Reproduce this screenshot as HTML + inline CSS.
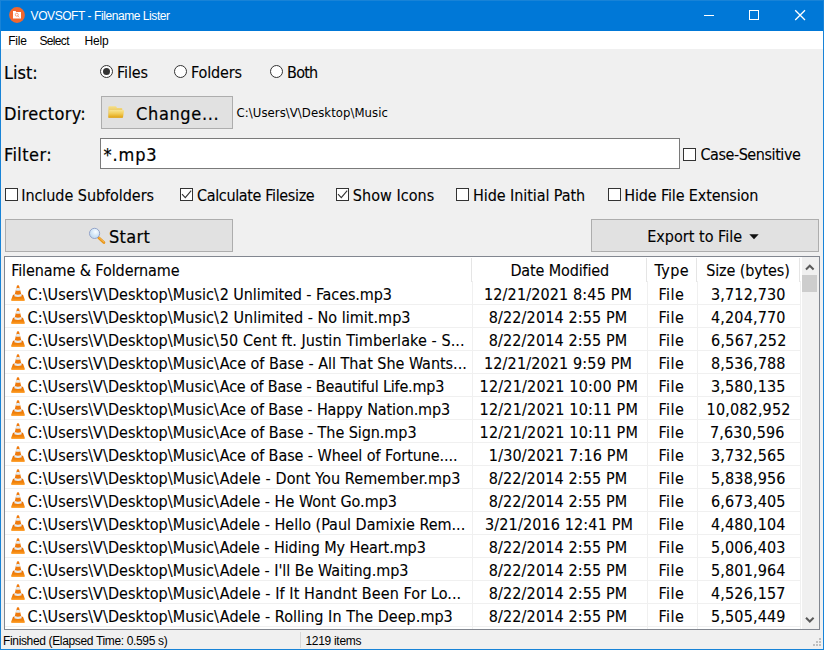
<!DOCTYPE html>
<html><head><meta charset="utf-8"><title>VOVSOFT - Filename Lister</title>
<style>
html,body{margin:0;padding:0;}
body{width:824px;height:650px;overflow:hidden;position:relative;background:#f0f0f0;font-family:"DejaVu Sans Condensed","Liberation Sans",sans-serif;color:#000;}
.abs{position:absolute;white-space:nowrap;}
#title{left:0;top:0;width:824px;height:31px;background:#0078d7;}
.ttl{font-size:12px;color:#fff;line-height:15px;font-family:"Liberation Sans",sans-serif;}
.mnu{font-size:12px;line-height:19px;font-family:"Liberation Sans",sans-serif;}
#menu{left:1px;top:31px;width:822px;height:18px;background:#fff;}
#bl{left:0;top:0;width:1px;height:650px;background:#1883d7;}
#bt{left:0;top:0;width:824px;height:1px;background:#1883d7;}
#br{left:823px;top:0;width:1px;height:650px;background:#1883d7;}
#bb{left:0;top:649px;width:824px;height:1px;background:#1883d7;}
.lbl{font-size:18px;line-height:22px;-webkit-text-stroke:0.2px #000;}
.opt{font-size:16px;line-height:20px;-webkit-text-stroke:0.1px #000;}
.pth{font-size:13px;line-height:16px;}
.sts{font-size:12px;line-height:17px;font-family:"Liberation Sans",sans-serif;}
.radio{width:11px;height:11px;border:1px solid #333;border-radius:50%;background:#fff;}
.radio.on::after{content:"";position:absolute;left:2px;top:2px;width:7px;height:7px;border-radius:50%;background:#333;}
.cb{width:11px;height:11px;border:1px solid #333;background:#fff;}
.btn{background:#e1e1e1;border:1px solid #adadad;box-sizing:border-box;}
#list{left:4px;top:256px;width:814px;height:372px;background:#fff;border:1px solid #828790;}
.hl{background:#f0f0f0;height:1px;left:5px;width:796px;}
.vl{background:#f0f0f0;width:1px;top:281px;height:348px;}
.vh{background:#e5e5e5;width:1px;top:258px;height:24px;}
#status{left:1px;top:631px;width:822px;height:18px;background:#f0f0f0;}
</style></head><body>
<svg width="0" height="0" style="position:absolute"><defs><linearGradient id="cg" x1="0" y1="0" x2="0" y2="1"><stop offset="0" stop-color="#e56a00"/><stop offset="0.7" stop-color="#f58a10"/><stop offset="1" stop-color="#ffa63a"/></linearGradient></defs></svg>
<div id="title" class="abs">
<svg class="abs" style="left:8px;top:7px" width="17" height="17" viewBox="0 0 17 17"><circle cx="9" cy="8" r="7.900" fill="#f1672f"/><path d="M5 4h2.600l0.700 0.900h4.700v6.700h-8z" fill="#fff"/><circle cx="8.800" cy="7.700" r="1.500" fill="none" stroke="#f1672f" stroke-width="0.600"/><path d="M9.800 8.800l1.300 1.500" stroke="#f1672f" stroke-width="0.600"/></svg>
<svg class="abs" style="left:686px;top:0" width="138" height="31" viewBox="0 0 138 31"><g stroke="#fff" stroke-width="1" fill="none"><path d="M18 15.500h10"/><rect x="63.500" y="10.500" width="9" height="9"/><path d="M109.200 10.200l9.800 9.800M119 10.200l-9.800 9.800" stroke-width="1.300"/></g></svg>
</div>
<div id="menu" class="abs"></div>

<div class="abs radio on" style="left:100px;top:65px"></div>
<div class="abs radio" style="left:174px;top:65px"></div>
<div class="abs radio" style="left:270px;top:65px"></div>

<div class="abs btn" style="left:101px;top:96px;width:132px;height:33px"></div>
<svg class="abs" style="left:108px;top:106px" width="17" height="13" viewBox="0 0 17 13"><defs><linearGradient id="fg" x1="0" y1="0" x2="0" y2="1"><stop offset="0" stop-color="#f8e491"/><stop offset="0.45" stop-color="#f2cd58"/><stop offset="1" stop-color="#e0a10f"/></linearGradient><linearGradient id="fb" x1="0" y1="0" x2="0" y2="1"><stop offset="0" stop-color="#f6df86"/><stop offset="1" stop-color="#dcaa35"/></linearGradient></defs><path d="M0.400 1q0-0.800 0.800-0.800h6.300q0.700 0 1 0.700l0.400 1h4.600q0.800 0 0.800 0.800v8.800h-13.900z" fill="url(#fb)"/><path d="M1.900 4.100h13.500q0.700 0 0.600 0.700l-1 6.400q-0.100 0.600-0.700 0.600h-13.300q-0.600 0-0.600-0.600l0.800-6.500q0.100-0.600 0.700-0.600z" fill="url(#fg)"/></svg>

<div class="abs" style="left:100px;top:138px;width:578px;height:29px;background:#fff;border:1px solid #7a7a7a"></div>
<div class="abs cb" style="left:683px;top:148px"></div>

<div class="abs cb" style="left:5px;top:188px"></div>
<div class="abs cb" style="left:180px;top:188px"></div>
<div class="abs cb" style="left:336px;top:188px"></div>
<div class="abs cb" style="left:456px;top:188px"></div>
<div class="abs cb" style="left:608px;top:188px"></div>
<svg class="abs" style="left:180px;top:188px" width="13" height="13" viewBox="0 0 13 13"><path d="M2 6.100l3.300 3.500l5.900-6.900" stroke="#333" stroke-width="1.100" fill="none"/></svg>
<svg class="abs" style="left:336px;top:188px" width="13" height="13" viewBox="0 0 13 13"><path d="M2 6.100l3.300 3.500l5.900-6.900" stroke="#333" stroke-width="1.100" fill="none"/></svg>

<div class="abs btn" style="left:5px;top:219px;width:228px;height:33px"></div>
<svg class="abs" style="left:88px;top:227px" width="18" height="18" viewBox="0 0 18 18"><defs><radialGradient id="mg" cx="0.6" cy="0.35" r="0.7"><stop offset="0" stop-color="#fafdff"/><stop offset="0.5" stop-color="#d6e8f7"/><stop offset="1" stop-color="#bcd6ee"/></radialGradient></defs><path d="M10.700 10.800l5.200 4.700" stroke="#e8951a" stroke-width="2.800" stroke-linecap="round"/><path d="M10.900 10.500l5 4.500" stroke="#f8bd55" stroke-width="1" stroke-linecap="round"/><circle cx="6.560" cy="6.400" r="5.100" fill="url(#mg)" stroke="#8d9dc5" stroke-width="0.900"/></svg>
<div class="abs btn" style="left:591px;top:219px;width:228px;height:33px"></div>
<svg class="abs" style="left:749px;top:234px" width="10" height="6" viewBox="0 0 10 6"><path d="M0.300 0.300h9.400l-4.700 5z" fill="#111"/></svg>

<div id="list" class="abs"></div>
<div class="abs vh" style="left:471px"></div><div class="abs vh" style="left:646px"></div><div class="abs vh" style="left:696px"></div><div class="abs vh" style="left:799px"></div><div class="abs vl" style="left:472px"></div><div class="abs vl" style="left:647px"></div><div class="abs vl" style="left:697px"></div><div class="abs vl" style="left:800px"></div>
<div class="abs hl" style="top:304px"></div>
<div class="abs hl" style="top:327px"></div>
<div class="abs hl" style="top:350px"></div>
<div class="abs hl" style="top:373px"></div>
<div class="abs hl" style="top:396px"></div>
<div class="abs hl" style="top:419px"></div>
<div class="abs hl" style="top:442px"></div>
<div class="abs hl" style="top:465px"></div>
<div class="abs hl" style="top:488px"></div>
<div class="abs hl" style="top:511px"></div>
<div class="abs hl" style="top:534px"></div>
<div class="abs hl" style="top:557px"></div>
<div class="abs hl" style="top:580px"></div>
<div class="abs hl" style="top:603px"></div>
<div class="abs hl" style="top:626px"></div>
<svg class="abs" style="left:10px;top:285px" width="16" height="16" viewBox="0 0 16 16"><path d="M3 9.800h10l1.900 5.200q0 0.900-0.900 0.900h-12q-1 0-0.900-0.900z" fill="url(#cg)"/><path d="M7 0.600q1-0.800 2 0l2.700 10.400q-3.700 2-7.400 0z" fill="#f07a0c"/><path d="M6.380 3h3.240l0.630 2.400q-2.250 0.800-4.500 0z" fill="#e4ecf1"/><path d="M4.790 9.100q3.210 1.100 6.420 0l0.540 2.100q-3.750 1.400-7.500 0z" fill="#e4ecf1"/></svg>
<svg class="abs" style="left:10px;top:308px" width="16" height="16" viewBox="0 0 16 16"><path d="M3 9.800h10l1.900 5.200q0 0.900-0.900 0.900h-12q-1 0-0.900-0.900z" fill="url(#cg)"/><path d="M7 0.600q1-0.800 2 0l2.700 10.400q-3.700 2-7.400 0z" fill="#f07a0c"/><path d="M6.380 3h3.240l0.630 2.400q-2.250 0.800-4.500 0z" fill="#e4ecf1"/><path d="M4.790 9.100q3.210 1.100 6.420 0l0.540 2.100q-3.750 1.400-7.500 0z" fill="#e4ecf1"/></svg>
<svg class="abs" style="left:10px;top:331px" width="16" height="16" viewBox="0 0 16 16"><path d="M3 9.800h10l1.900 5.200q0 0.900-0.900 0.900h-12q-1 0-0.900-0.900z" fill="url(#cg)"/><path d="M7 0.600q1-0.800 2 0l2.700 10.400q-3.700 2-7.400 0z" fill="#f07a0c"/><path d="M6.380 3h3.240l0.630 2.400q-2.250 0.800-4.500 0z" fill="#e4ecf1"/><path d="M4.790 9.100q3.210 1.100 6.420 0l0.540 2.100q-3.750 1.400-7.500 0z" fill="#e4ecf1"/></svg>
<svg class="abs" style="left:10px;top:354px" width="16" height="16" viewBox="0 0 16 16"><path d="M3 9.800h10l1.900 5.200q0 0.900-0.900 0.900h-12q-1 0-0.900-0.900z" fill="url(#cg)"/><path d="M7 0.600q1-0.800 2 0l2.700 10.400q-3.700 2-7.400 0z" fill="#f07a0c"/><path d="M6.380 3h3.240l0.630 2.400q-2.250 0.800-4.500 0z" fill="#e4ecf1"/><path d="M4.790 9.100q3.210 1.100 6.420 0l0.540 2.100q-3.750 1.400-7.500 0z" fill="#e4ecf1"/></svg>
<svg class="abs" style="left:10px;top:377px" width="16" height="16" viewBox="0 0 16 16"><path d="M3 9.800h10l1.900 5.200q0 0.900-0.900 0.900h-12q-1 0-0.900-0.900z" fill="url(#cg)"/><path d="M7 0.600q1-0.800 2 0l2.700 10.400q-3.700 2-7.400 0z" fill="#f07a0c"/><path d="M6.380 3h3.240l0.630 2.400q-2.250 0.800-4.500 0z" fill="#e4ecf1"/><path d="M4.790 9.100q3.210 1.100 6.420 0l0.540 2.100q-3.750 1.400-7.500 0z" fill="#e4ecf1"/></svg>
<svg class="abs" style="left:10px;top:400px" width="16" height="16" viewBox="0 0 16 16"><path d="M3 9.800h10l1.900 5.200q0 0.900-0.900 0.900h-12q-1 0-0.900-0.900z" fill="url(#cg)"/><path d="M7 0.600q1-0.800 2 0l2.700 10.400q-3.700 2-7.400 0z" fill="#f07a0c"/><path d="M6.380 3h3.240l0.630 2.400q-2.250 0.800-4.500 0z" fill="#e4ecf1"/><path d="M4.790 9.100q3.210 1.100 6.420 0l0.540 2.100q-3.750 1.400-7.500 0z" fill="#e4ecf1"/></svg>
<svg class="abs" style="left:10px;top:423px" width="16" height="16" viewBox="0 0 16 16"><path d="M3 9.800h10l1.900 5.200q0 0.900-0.900 0.900h-12q-1 0-0.900-0.900z" fill="url(#cg)"/><path d="M7 0.600q1-0.800 2 0l2.700 10.400q-3.700 2-7.400 0z" fill="#f07a0c"/><path d="M6.380 3h3.240l0.630 2.400q-2.250 0.800-4.500 0z" fill="#e4ecf1"/><path d="M4.790 9.100q3.210 1.100 6.420 0l0.540 2.100q-3.750 1.400-7.500 0z" fill="#e4ecf1"/></svg>
<svg class="abs" style="left:10px;top:446px" width="16" height="16" viewBox="0 0 16 16"><path d="M3 9.800h10l1.900 5.200q0 0.900-0.900 0.900h-12q-1 0-0.900-0.900z" fill="url(#cg)"/><path d="M7 0.600q1-0.800 2 0l2.700 10.400q-3.700 2-7.400 0z" fill="#f07a0c"/><path d="M6.380 3h3.240l0.630 2.400q-2.250 0.800-4.500 0z" fill="#e4ecf1"/><path d="M4.790 9.100q3.210 1.100 6.420 0l0.540 2.100q-3.750 1.400-7.500 0z" fill="#e4ecf1"/></svg>
<svg class="abs" style="left:10px;top:469px" width="16" height="16" viewBox="0 0 16 16"><path d="M3 9.800h10l1.900 5.200q0 0.900-0.900 0.900h-12q-1 0-0.900-0.900z" fill="url(#cg)"/><path d="M7 0.600q1-0.800 2 0l2.700 10.400q-3.700 2-7.400 0z" fill="#f07a0c"/><path d="M6.380 3h3.240l0.630 2.400q-2.250 0.800-4.500 0z" fill="#e4ecf1"/><path d="M4.790 9.100q3.210 1.100 6.420 0l0.540 2.100q-3.750 1.400-7.500 0z" fill="#e4ecf1"/></svg>
<svg class="abs" style="left:10px;top:492px" width="16" height="16" viewBox="0 0 16 16"><path d="M3 9.800h10l1.900 5.200q0 0.900-0.900 0.900h-12q-1 0-0.900-0.900z" fill="url(#cg)"/><path d="M7 0.600q1-0.800 2 0l2.700 10.400q-3.700 2-7.400 0z" fill="#f07a0c"/><path d="M6.380 3h3.240l0.630 2.400q-2.250 0.800-4.500 0z" fill="#e4ecf1"/><path d="M4.790 9.100q3.210 1.100 6.420 0l0.540 2.100q-3.750 1.400-7.500 0z" fill="#e4ecf1"/></svg>
<svg class="abs" style="left:10px;top:515px" width="16" height="16" viewBox="0 0 16 16"><path d="M3 9.800h10l1.900 5.200q0 0.900-0.900 0.900h-12q-1 0-0.900-0.900z" fill="url(#cg)"/><path d="M7 0.600q1-0.800 2 0l2.700 10.400q-3.700 2-7.400 0z" fill="#f07a0c"/><path d="M6.380 3h3.240l0.630 2.400q-2.250 0.800-4.500 0z" fill="#e4ecf1"/><path d="M4.790 9.100q3.210 1.100 6.420 0l0.540 2.100q-3.750 1.400-7.500 0z" fill="#e4ecf1"/></svg>
<svg class="abs" style="left:10px;top:538px" width="16" height="16" viewBox="0 0 16 16"><path d="M3 9.800h10l1.900 5.200q0 0.900-0.900 0.900h-12q-1 0-0.900-0.900z" fill="url(#cg)"/><path d="M7 0.600q1-0.800 2 0l2.700 10.400q-3.700 2-7.400 0z" fill="#f07a0c"/><path d="M6.380 3h3.240l0.630 2.400q-2.250 0.800-4.500 0z" fill="#e4ecf1"/><path d="M4.790 9.100q3.210 1.100 6.420 0l0.540 2.100q-3.750 1.400-7.500 0z" fill="#e4ecf1"/></svg>
<svg class="abs" style="left:10px;top:561px" width="16" height="16" viewBox="0 0 16 16"><path d="M3 9.800h10l1.900 5.200q0 0.900-0.900 0.900h-12q-1 0-0.900-0.900z" fill="url(#cg)"/><path d="M7 0.600q1-0.800 2 0l2.700 10.400q-3.700 2-7.400 0z" fill="#f07a0c"/><path d="M6.380 3h3.240l0.630 2.400q-2.250 0.800-4.500 0z" fill="#e4ecf1"/><path d="M4.790 9.100q3.210 1.100 6.420 0l0.540 2.100q-3.750 1.400-7.500 0z" fill="#e4ecf1"/></svg>
<svg class="abs" style="left:10px;top:584px" width="16" height="16" viewBox="0 0 16 16"><path d="M3 9.800h10l1.900 5.200q0 0.900-0.900 0.900h-12q-1 0-0.900-0.900z" fill="url(#cg)"/><path d="M7 0.600q1-0.800 2 0l2.700 10.400q-3.700 2-7.400 0z" fill="#f07a0c"/><path d="M6.380 3h3.240l0.630 2.400q-2.250 0.800-4.500 0z" fill="#e4ecf1"/><path d="M4.790 9.100q3.210 1.100 6.420 0l0.540 2.100q-3.750 1.400-7.500 0z" fill="#e4ecf1"/></svg>
<svg class="abs" style="left:10px;top:607px" width="16" height="16" viewBox="0 0 16 16"><path d="M3 9.800h10l1.900 5.200q0 0.900-0.900 0.900h-12q-1 0-0.900-0.900z" fill="url(#cg)"/><path d="M7 0.600q1-0.800 2 0l2.700 10.400q-3.700 2-7.400 0z" fill="#f07a0c"/><path d="M6.380 3h3.240l0.630 2.400q-2.250 0.800-4.500 0z" fill="#e4ecf1"/><path d="M4.790 9.100q3.210 1.100 6.420 0l0.540 2.100q-3.750 1.400-7.500 0z" fill="#e4ecf1"/></svg>
<div class="abs" style="left:802px;top:257px;width:17px;height:372px;background:#f0f0f0"></div>
<div class="abs" style="left:802px;top:275px;width:15px;height:17px;background:#cdcdcd"></div>
<svg class="abs" style="left:802px;top:257.700px" width="17" height="17" viewBox="0 0 17 17"><path d="M4 11.500l3.800-3.800l3.800 3.800" stroke="#5a5a5a" stroke-width="2" fill="none"/></svg>
<svg class="abs" style="left:802px;top:612px" width="17" height="17" viewBox="0 0 17 17"><path d="M4 5.700l3.800 3.800l3.800-3.800" stroke="#5a5a5a" stroke-width="2" fill="none"/></svg>

<div id="status" class="abs"></div>
<div class="abs" style="left:300px;top:632px;width:1px;height:16px;background:#d7d7d7"></div>
<svg class="abs" style="left:811px;top:637px" width="12" height="12" viewBox="0 0 12 12"><g fill="#bfbfbf"><rect x="8" y="1" width="2" height="2"/><rect x="5" y="4" width="2" height="2"/><rect x="8" y="4" width="2" height="2"/><rect x="2" y="7" width="2" height="2"/><rect x="5" y="7" width="2" height="2"/><rect x="8" y="7" width="2" height="2"/></g></svg>
<div id="t_title" class="abs ttl" style="left:30.60px;top:9px;letter-spacing:-0.433px;">VOVSOFT - Filename Lister</div>
<div id="m_file" class="abs mnu" style="left:8.20px;top:32px;letter-spacing:-0.200px;">File</div>
<div id="m_select" class="abs mnu" style="left:39.40px;top:32px;letter-spacing:-0.640px;">Select</div>
<div id="m_help" class="abs mnu" style="left:84.60px;top:32px;letter-spacing:-0.200px;">Help</div>
<div id="l_list" class="abs lbl" style="left:4.00px;top:62px;">List:</div>
<div id="o_files" class="abs opt" style="left:117.00px;top:63px;letter-spacing:-0.100px;">Files</div>
<div id="o_folders" class="abs opt" style="left:191.00px;top:63px;letter-spacing:-0.167px;">Folders</div>
<div id="o_both" class="abs opt" style="left:287.00px;top:63px;letter-spacing:-0.733px;">Both</div>
<div id="l_dir" class="abs lbl" style="left:4.00px;top:103px;letter-spacing:0.333px;">Directory:</div>
<div id="b_change" class="abs lbl" style="left:136.00px;top:103px;letter-spacing:0.650px;">Change...</div>
<div id="p_path" class="abs pth" style="left:236.60px;top:105px;letter-spacing:0.052px;">C:\Users\V\Desktop\Music</div>
<div id="l_filter" class="abs lbl" style="left:4.00px;top:144px;letter-spacing:0.433px;">Filter:</div>
<div id="i_filter" class="abs lbl" style="left:103.60px;top:144px;letter-spacing:0.850px;">*.mp3</div>
<div id="o_case" class="abs opt" style="left:700.40px;top:145px;letter-spacing:-0.431px;">Case-Sensitive</div>
<div id="o_incl" class="abs opt" style="left:21.20px;top:186px;letter-spacing:-0.047px;">Include Subfolders</div>
<div id="o_calc" class="abs opt" style="left:197.00px;top:186px;letter-spacing:-0.353px;">Calculate Filesize</div>
<div id="o_show" class="abs opt" style="left:352.80px;top:186px;letter-spacing:0.044px;">Show Icons</div>
<div id="o_hidei" class="abs opt" style="left:473.00px;top:186px;letter-spacing:-0.075px;">Hide Initial Path</div>
<div id="o_hidef" class="abs opt" style="left:624.20px;top:186px;letter-spacing:-0.133px;">Hide File Extension</div>
<div id="b_start" class="abs lbl" style="left:109.00px;top:226px;letter-spacing:0.300px;">Start</div>
<div id="b_export" class="abs opt" style="left:647.20px;top:227px;letter-spacing:0.015px;">Export to File</div>
<div id="h_name" class="abs opt" style="left:11.20px;top:261px;letter-spacing:-0.090px;">Filename &amp; Foldername</div>
<div id="h_date" class="abs opt" style="left:510.40px;top:261px;letter-spacing:-0.133px;">Date Modified</div>
<div id="h_type" class="abs opt" style="left:654.60px;top:261px;letter-spacing:0.400px;">Type</div>
<div id="h_size" class="abs opt" style="left:706.20px;top:261px;letter-spacing:-0.127px;">Size (bytes)</div>
<div id="s_fin" class="abs sts" style="left:3.00px;top:633px;letter-spacing:-0.348px;">Finished (Elapsed Time: 0.595 s)</div>
<div id="s_items" class="abs sts" style="left:305.40px;top:633px;letter-spacing:-0.289px;">1219 items</div>
<div id="r0a" class="abs opt" style="left:27.60px;top:285px;letter-spacing:0.067px;">C:\Users\V\Desktop\Music\<span id="r0b" class="abs" style="left:192.20px;top:0;letter-spacing:-0.091px">2 Unlimited - Faces.mp3</span></div>
<div id="r0d" class="abs opt" style="left:484.00px;top:285px;letter-spacing:0.141px;">12/21/2021 8:45 PM</div>
<div id="r0t" class="abs opt" style="left:658.40px;top:285px;letter-spacing:0.467px;">File</div>
<div id="r0s" class="abs opt" style="left:711.00px;top:285px;letter-spacing:0.150px;">3,712,730</div>
<div id="r1a" class="abs opt" style="left:27.60px;top:308px;letter-spacing:0.067px;">C:\Users\V\Desktop\Music\<span id="r1b" class="abs" style="left:192.20px;top:0;letter-spacing:0.024px">2 Unlimited - No limit.mp3</span></div>
<div id="r1d" class="abs opt" style="left:488.80px;top:308px;letter-spacing:0.125px;">8/22/2014 2:55 PM</div>
<div id="r1t" class="abs opt" style="left:658.40px;top:308px;letter-spacing:0.467px;">File</div>
<div id="r1s" class="abs opt" style="left:711.00px;top:308px;letter-spacing:0.150px;">4,204,770</div>
<div id="r2a" class="abs opt" style="left:27.60px;top:331px;letter-spacing:0.067px;">C:\Users\V\Desktop\Music\<span id="r2b" class="abs" style="left:192.20px;top:0;letter-spacing:0.086px">50 Cent ft. Justin Timberlake - S...</span></div>
<div id="r2d" class="abs opt" style="left:488.80px;top:331px;letter-spacing:0.125px;">8/22/2014 2:55 PM</div>
<div id="r2t" class="abs opt" style="left:658.40px;top:331px;letter-spacing:0.467px;">File</div>
<div id="r2s" class="abs opt" style="left:711.00px;top:331px;letter-spacing:0.275px;">6,567,252</div>
<div id="r3a" class="abs opt" style="left:27.60px;top:354px;letter-spacing:0.067px;">C:\Users\V\Desktop\Music\<span id="r3b" class="abs" style="left:192.20px;top:0;letter-spacing:-0.024px">Ace of Base - All That She Wants...</span></div>
<div id="r3d" class="abs opt" style="left:484.00px;top:354px;letter-spacing:0.141px;">12/21/2021 9:59 PM</div>
<div id="r3t" class="abs opt" style="left:658.40px;top:354px;letter-spacing:0.467px;">File</div>
<div id="r3s" class="abs opt" style="left:711.00px;top:354px;letter-spacing:0.150px;">8,536,788</div>
<div id="r4a" class="abs opt" style="left:27.60px;top:377px;letter-spacing:0.067px;">C:\Users\V\Desktop\Music\<span id="r4b" class="abs" style="left:192.20px;top:0;letter-spacing:-0.194px">Ace of Base - Beautiful Life.mp3</span></div>
<div id="r4d" class="abs opt" style="left:479.60px;top:377px;letter-spacing:0.200px;">12/21/2021 10:00 PM</div>
<div id="r4t" class="abs opt" style="left:658.40px;top:377px;letter-spacing:0.467px;">File</div>
<div id="r4s" class="abs opt" style="left:711.00px;top:377px;letter-spacing:0.150px;">3,580,135</div>
<div id="r5a" class="abs opt" style="left:27.60px;top:400px;letter-spacing:0.067px;">C:\Users\V\Desktop\Music\<span id="r5b" class="abs" style="left:192.20px;top:0;letter-spacing:-0.117px">Ace of Base - Happy Nation.mp3</span></div>
<div id="r5d" class="abs opt" style="left:479.60px;top:400px;letter-spacing:0.200px;">12/21/2021 10:11 PM</div>
<div id="r5t" class="abs opt" style="left:658.40px;top:400px;letter-spacing:0.467px;">File</div>
<div id="r5s" class="abs opt" style="left:706.60px;top:400px;letter-spacing:0.156px;">10,082,952</div>
<div id="r6a" class="abs opt" style="left:27.60px;top:423px;letter-spacing:0.067px;">C:\Users\V\Desktop\Music\<span id="r6b" class="abs" style="left:192.20px;top:0;letter-spacing:-0.064px">Ace of Base - The Sign.mp3</span></div>
<div id="r6d" class="abs opt" style="left:479.60px;top:423px;letter-spacing:0.200px;">12/21/2021 10:11 PM</div>
<div id="r6t" class="abs opt" style="left:658.40px;top:423px;letter-spacing:0.467px;">File</div>
<div id="r6s" class="abs opt" style="left:710.00px;top:423px;letter-spacing:0.150px;">7,630,596</div>
<div id="r7a" class="abs opt" style="left:27.60px;top:446px;letter-spacing:0.067px;">C:\Users\V\Desktop\Music\<span id="r7b" class="abs" style="left:192.20px;top:0;letter-spacing:-0.073px">Ace of Base - Wheel of Fortune....</span></div>
<div id="r7d" class="abs opt" style="left:488.80px;top:446px;letter-spacing:0.188px;">1/30/2021 7:16 PM</div>
<div id="r7t" class="abs opt" style="left:658.40px;top:446px;letter-spacing:0.467px;">File</div>
<div id="r7s" class="abs opt" style="left:711.00px;top:446px;letter-spacing:0.150px;">3,732,565</div>
<div id="r8a" class="abs opt" style="left:27.60px;top:469px;letter-spacing:0.067px;">C:\Users\V\Desktop\Music\<span id="r8b" class="abs" style="left:192.20px;top:0;letter-spacing:0.114px">Adele - Dont You Remember.mp3</span></div>
<div id="r8d" class="abs opt" style="left:488.80px;top:469px;letter-spacing:0.125px;">8/22/2014 2:55 PM</div>
<div id="r8t" class="abs opt" style="left:658.40px;top:469px;letter-spacing:0.467px;">File</div>
<div id="r8s" class="abs opt" style="left:711.00px;top:469px;letter-spacing:0.150px;">5,838,956</div>
<div id="r9a" class="abs opt" style="left:27.60px;top:492px;letter-spacing:0.067px;">C:\Users\V\Desktop\Music\<span id="r9b" class="abs" style="left:192.20px;top:0;letter-spacing:0.010px">Adele - He Wont Go.mp3</span></div>
<div id="r9d" class="abs opt" style="left:488.80px;top:492px;letter-spacing:0.125px;">8/22/2014 2:55 PM</div>
<div id="r9t" class="abs opt" style="left:658.40px;top:492px;letter-spacing:0.467px;">File</div>
<div id="r9s" class="abs opt" style="left:711.00px;top:492px;letter-spacing:0.150px;">6,673,405</div>
<div id="r10a" class="abs opt" style="left:27.60px;top:515px;letter-spacing:0.067px;">C:\Users\V\Desktop\Music\<span id="r10b" class="abs" style="left:192.20px;top:0;letter-spacing:-0.006px">Adele - Hello (Paul Damixie Rem...</span></div>
<div id="r10d" class="abs opt" style="left:485.00px;top:515px;letter-spacing:0.141px;">3/21/2016 12:41 PM</div>
<div id="r10t" class="abs opt" style="left:658.40px;top:515px;letter-spacing:0.467px;">File</div>
<div id="r10s" class="abs opt" style="left:711.00px;top:515px;letter-spacing:0.150px;">4,480,104</div>
<div id="r11a" class="abs opt" style="left:27.60px;top:538px;letter-spacing:0.067px;">C:\Users\V\Desktop\Music\<span id="r11b" class="abs" style="left:192.20px;top:0;letter-spacing:-0.077px">Adele - Hiding My Heart.mp3</span></div>
<div id="r11d" class="abs opt" style="left:488.80px;top:538px;letter-spacing:0.125px;">8/22/2014 2:55 PM</div>
<div id="r11t" class="abs opt" style="left:658.40px;top:538px;letter-spacing:0.467px;">File</div>
<div id="r11s" class="abs opt" style="left:711.00px;top:538px;letter-spacing:0.150px;">5,006,403</div>
<div id="r12a" class="abs opt" style="left:27.60px;top:561px;letter-spacing:0.067px;">C:\Users\V\Desktop\Music\<span id="r12b" class="abs" style="left:192.20px;top:0;letter-spacing:-0.038px">Adele - I'll Be Waiting.mp3</span></div>
<div id="r12d" class="abs opt" style="left:488.80px;top:561px;letter-spacing:0.125px;">8/22/2014 2:55 PM</div>
<div id="r12t" class="abs opt" style="left:658.40px;top:561px;letter-spacing:0.467px;">File</div>
<div id="r12s" class="abs opt" style="left:711.00px;top:561px;letter-spacing:0.150px;">5,801,964</div>
<div id="r13a" class="abs opt" style="left:27.60px;top:584px;letter-spacing:0.067px;">C:\Users\V\Desktop\Music\<span id="r13b" class="abs" style="left:192.20px;top:0;letter-spacing:0.082px">Adele - If It Handnt Been For Lo...</span></div>
<div id="r13d" class="abs opt" style="left:488.80px;top:584px;letter-spacing:0.125px;">8/22/2014 2:55 PM</div>
<div id="r13t" class="abs opt" style="left:658.40px;top:584px;letter-spacing:0.467px;">File</div>
<div id="r13s" class="abs opt" style="left:711.00px;top:584px;letter-spacing:0.150px;">4,526,157</div>
<div id="r14a" class="abs opt" style="left:27.60px;top:607px;letter-spacing:0.067px;">C:\Users\V\Desktop\Music\<span id="r14b" class="abs" style="left:192.20px;top:0;letter-spacing:0.040px">Adele - Rolling In The Deep.mp3</span></div>
<div id="r14d" class="abs opt" style="left:488.80px;top:607px;letter-spacing:0.125px;">8/22/2014 2:55 PM</div>
<div id="r14t" class="abs opt" style="left:658.40px;top:607px;letter-spacing:0.467px;">File</div>
<div id="r14s" class="abs opt" style="left:711.00px;top:607px;letter-spacing:0.150px;">5,505,449</div>
<div id="bt" class="abs"></div><div id="bl" class="abs"></div><div id="br" class="abs"></div><div id="bb" class="abs"></div>
</body></html>
